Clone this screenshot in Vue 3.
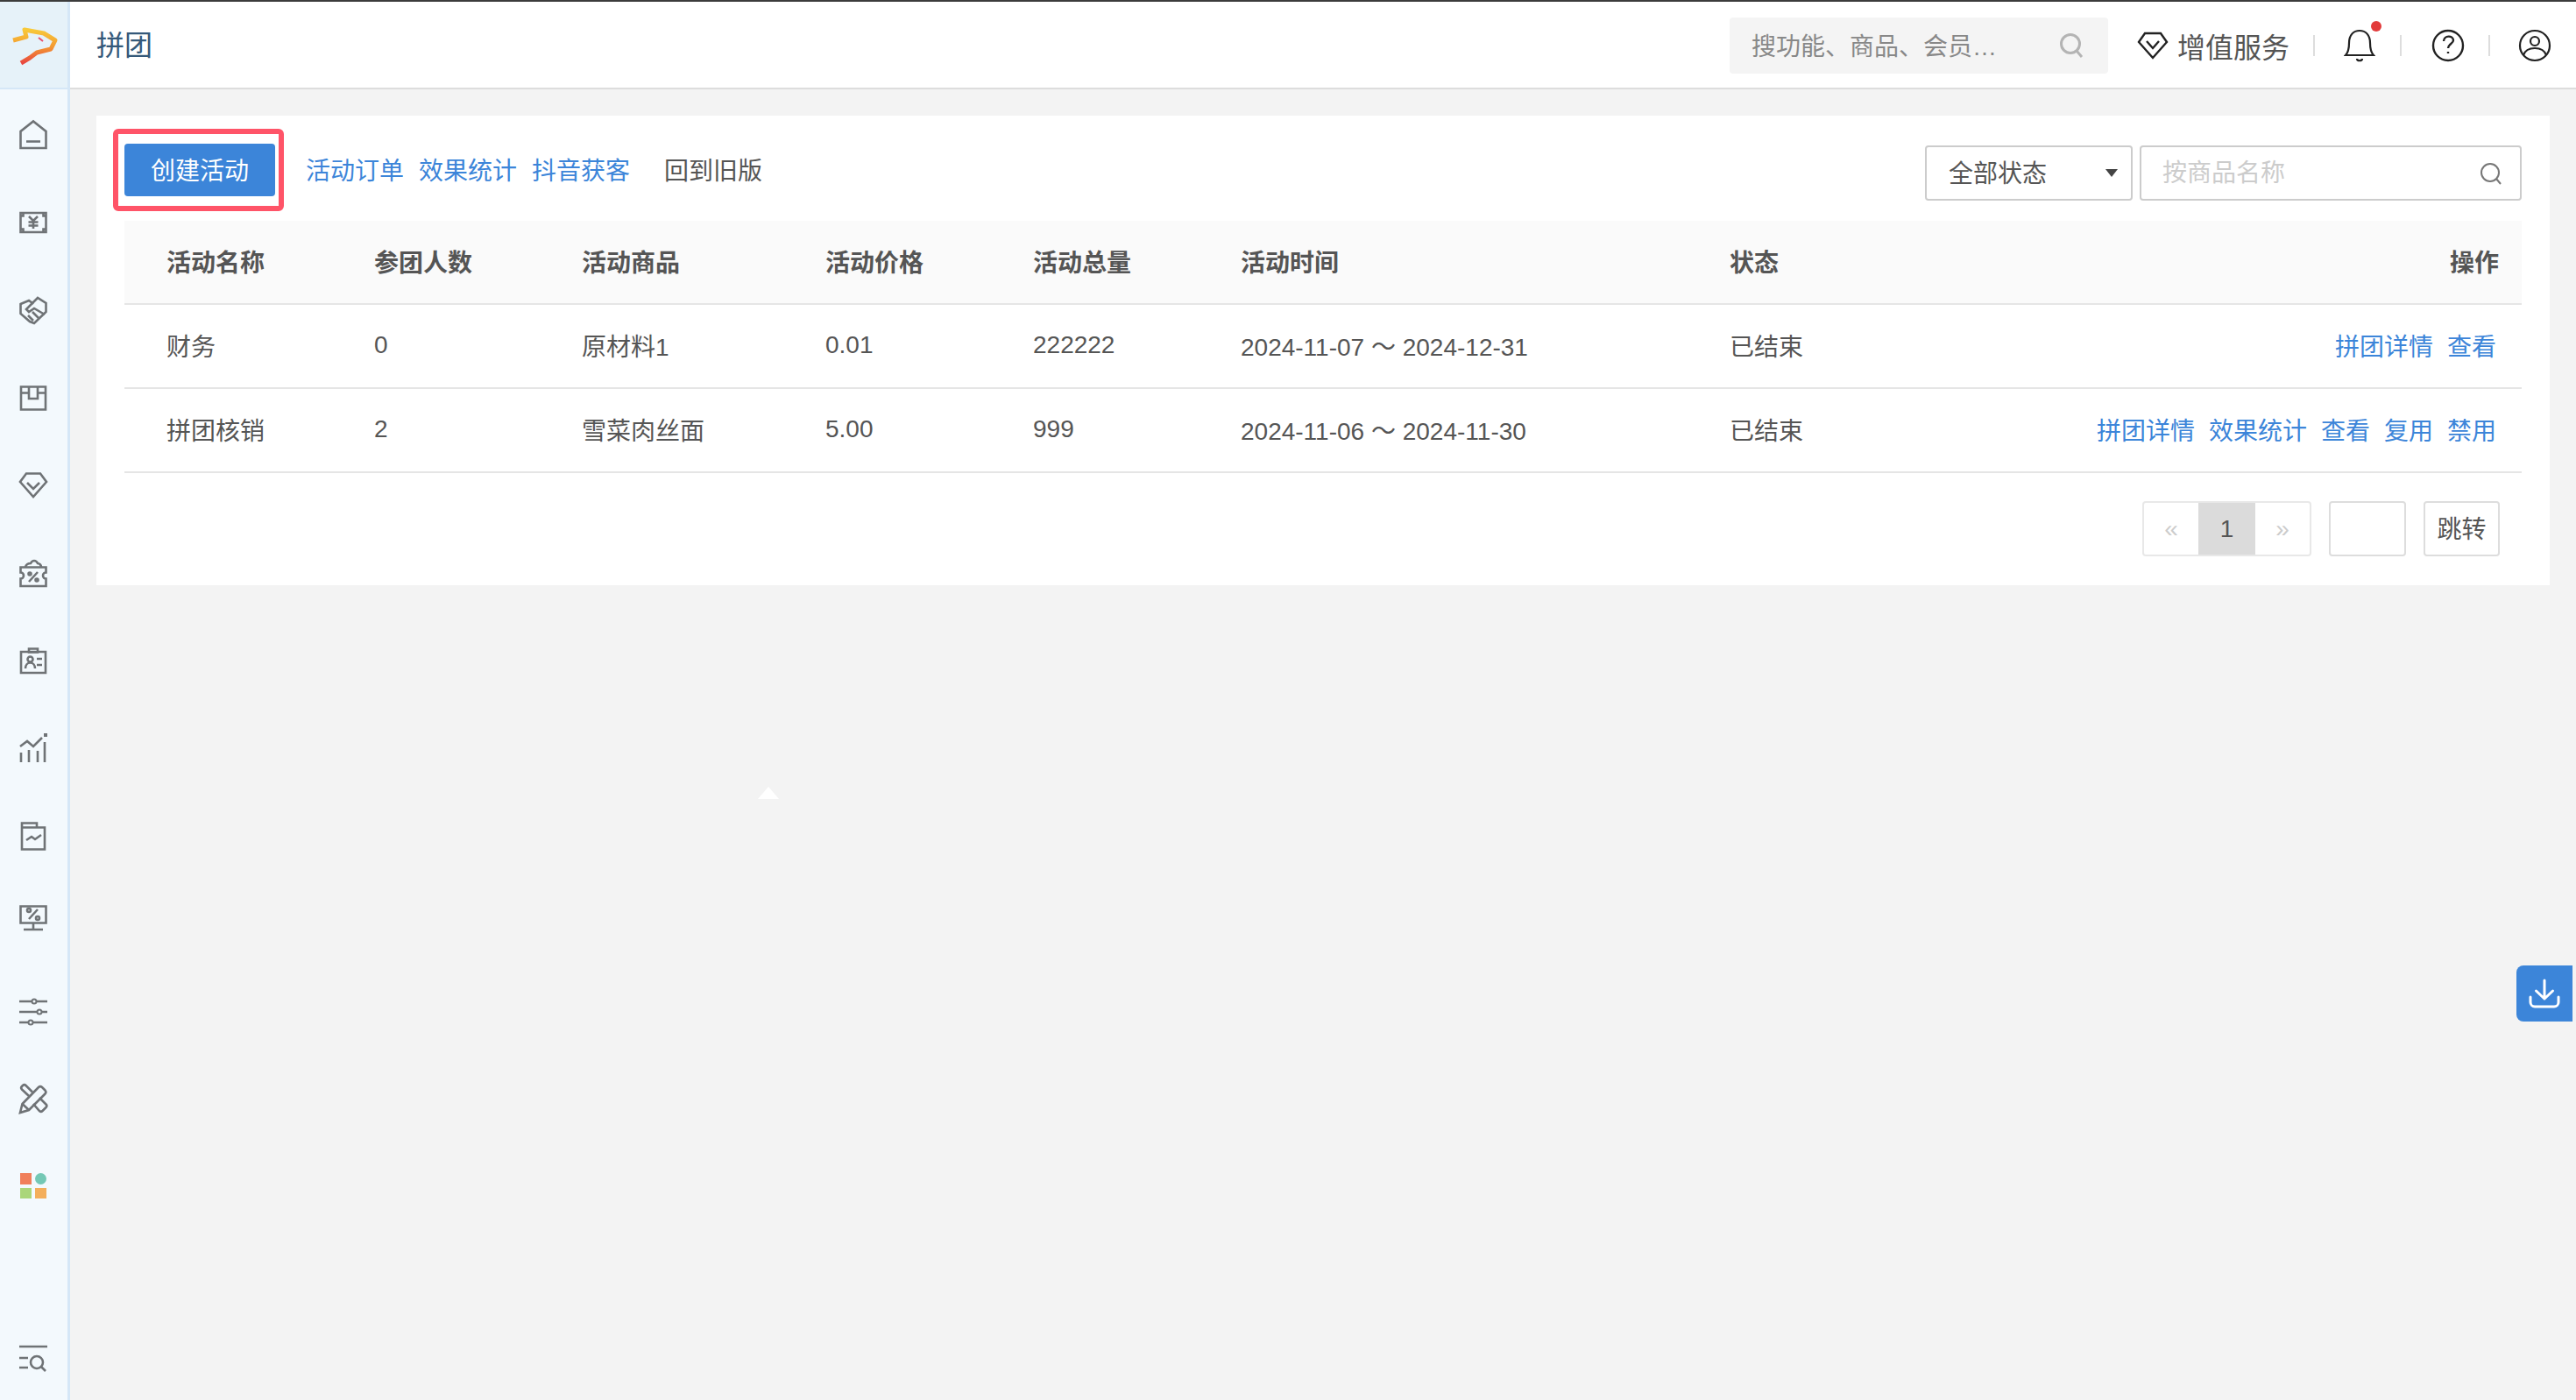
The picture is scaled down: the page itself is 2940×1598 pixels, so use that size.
<script setup>
const columns = [
  { label: '活动名称', width: '237px' },
  { label: '参团人数', width: '237px' },
  { label: '活动商品', width: '278px' },
  { label: '活动价格', width: '237px' },
  { label: '活动总量', width: '237px' },
  { label: '活动时间', width: '558px' },
  { label: '状态', width: '300px' },
  { label: '操作', width: 'auto' }
]

const rows = [
  { name: '财务', joined: '0', goods: '原材料1', price: '0.01', total: '222222', time: '2024-11-07 ～ 2024-12-31', status: '已结束', actions: ['拼团详情', '查看'] },
  { name: '拼团核销', joined: '2', goods: '雪菜肉丝面', price: '5.00', total: '999', time: '2024-11-06 ～ 2024-11-30', status: '已结束', actions: ['拼团详情', '效果统计', '查看', '复用', '禁用'] }
]

const links = ['活动订单', '效果统计', '抖音获客']
</script>

<template>
  <div class="page">
    <aside class="sidebar">
      <div class="logo">
        <svg width="78" height="98" viewBox="0 0 78 98" fill="none">
          <defs>
            <linearGradient id="logoGrad" x1="0" y1="0" x2="0" y2="1">
              <stop offset="0" stop-color="#f8c93a" />
              <stop offset="0.5" stop-color="#f39a32" />
              <stop offset="1" stop-color="#e9473f" />
            </linearGradient>
          </defs>
          <path d="M15 46l15-4-2-8 22 4 13 8-5 10-16 4-8 6-10 6" stroke="url(#logoGrad)" stroke-width="5" stroke-linejoin="round" />
          <path d="M44 43l5 4" stroke="#ea4f6a" stroke-width="2" />
        </svg>
      </div>
      <nav class="nav">
        <div class="nav-item"><svg class="ico" viewBox="0 0 32 36"><path d="M1.500 32V13L16 1.500 30.500 13v19z" /><path d="M8 24.500h16" /></svg></div>
        <div class="nav-item"><svg class="ico" viewBox="0 0 32 36"><path d="M1.500 6h29v22h-29z" /><path d="M11 10l5 5 5-5M16 15v9M10.500 16.500h11M10.500 20.500h11" /><path d="M1.500 9.500h3v-3.500M30.500 9.500h-3v-3.500M1.500 24.500h3v3.500M30.500 24.500h-3v3.500" /></svg></div>
        <div class="nav-item"><svg class="ico" viewBox="0 0 32 36"><path d="M1.500 10L11 6l4 3 6-6 9.500 6v10L17 32l-5-2-10.500-9z" /><path d="M16 8l-8 8 3 3 6-4 12 7M10 23l6 6M15 19l7 7" /></svg></div>
        <div class="nav-item"><svg class="ico" viewBox="0 0 32 36"><path d="M2 4.500h28v26H2z" /><path d="M2 11.500h9M21 11.500h9M11 4.500V18h10V4.500" /></svg></div>
        <div class="nav-item"><svg class="ico" viewBox="0 0 32 36"><path d="M8 3.500h16l7 9.500-15 17L1 13z" /><path d="M9 14l7 7 7-7" /></svg></div>
        <div class="nav-item"><svg class="ico" viewBox="0 0 32 36"><path d="M1.500 10.500h29v6a3.500 3.500 0 0 0 0 7v8.500h-29v-8.500a3.500 3.500 0 0 0 0-7z" /><path d="M7 10c1-3 3-4 6-4 2-4 6-4 8 0 2 0 4 2 4 4M11 27l10-11" /><circle cx="12" cy="18" r="1.500" /><circle cx="20" cy="25" r="1.500" /></svg></div>
        <div class="nav-item"><svg class="ico" viewBox="0 0 32 36"><path d="M2 7h28v24H2z" /><path d="M11 3.500h10v4H11z" /><circle cx="12.500" cy="15.500" r="3" /><path d="M7 26c0-4 2.500-6.500 5.500-6.500S18 22 18 26M20 15h6M20 22h6" /></svg></div>
        <div class="nav-item"><svg class="ico" viewBox="0 0 32 36"><path d="M1 15l8-6 7 6 10-10M2 22v11M11 19v14M21 20v13M29 10v23" /><path class="dot" d="M28 0h4v4h-4z" /></svg></div>
        <div class="nav-item"><svg class="ico" viewBox="0 0 32 36"><path d="M3 2.500h17v5h9v25H3zM3 7.500h17" /><path d="M8 22l6-4 4 3 7-5" /></svg></div>
        <div class="nav-item nav-up"><svg class="ico" viewBox="0 0 32 36"><path d="M1.500 5.500h29v19h-29zM16 24.500v7M5 32h22" /><path d="M11 20l10-11" /><circle cx="11" cy="10" r="2" /><circle cx="21" cy="19" r="2" /></svg></div>
        <div class="nav-item"><svg class="ico" viewBox="0 0 32 36"><path d="M0 6h32M0 18h32M0 30h32" /><circle class="knob" cx="17" cy="6" r="2.500" /><circle class="knob" cx="23" cy="18" r="2.500" /><circle class="knob" cx="13" cy="30" r="2.500" /></svg></div>
        <div class="nav-item"><svg class="ico" viewBox="0 0 32 36"><path d="M1 33l2.500-10L22 4a3 3 0 0 1 4 0l3.500 3.500a3 3 0 0 1 0 4L11 30zM3.500 23l7.500 7" /><path d="M11 14L3 6.500a2.500 2.500 0 0 1 0-3.500l1-1a2.500 2.500 0 0 1 3.500 0L15 9.500M16 23l7 8a2.500 2.500 0 0 0 3.500 0l4-4a2.500 2.500 0 0 0 0-3.500L23 16" /></svg></div>
        <div class="nav-item"><svg class="ico" viewBox="0 0 32 36"><path class="fill" fill="#f07f5b" d="M1 2h13v13H1z" /><circle class="fill" fill="#74c8b5" cx="24.500" cy="8.500" r="6.500" /><path class="fill" fill="#aad67a" d="M1 19h13v12H1z" /><path class="fill" fill="#f3ae5b" d="M18 19h13v12H18z" /></svg></div>
        <div class="nav-item nav-bottom"><svg class="ico" viewBox="0 0 32 36"><path d="M0 4h32M0 17h10M0 28h10" /><circle cx="20" cy="22" r="7" /><path d="M25 27l5 5" /></svg></div>
      </nav>
    </aside>

    <div class="main">
      <header class="topbar">
        <h1 class="title">拼团</h1>
        <div class="top-right">
          <div class="global-search">
            <input class="global-input" placeholder="搜功能、商品、会员…" />
            <svg class="search-ico" width="28" height="30" viewBox="0 0 28 30" fill="none" stroke="#b4b4b4" stroke-width="3"><circle cx="13" cy="13" r="10.500" /><path d="M20 21l6 7" /></svg>
          </div>
          <div class="vip">
            <svg width="36" height="32" viewBox="0 0 36 32" fill="none" stroke="#222" stroke-width="2.400"><path d="M9 2h18l7 10-16 18L2 12z" /><path d="M11 11l7 8 7-8" /></svg>
            <span>增值服务</span>
          </div>
          <i class="sep sep-vip"></i>
          <div class="top-icon">
            <svg width="36" height="38" viewBox="0 0 36 38" fill="none" stroke="#222" stroke-width="2.200"><path d="M2 30c3-3 4-6 4-14C6 7 11 2 18 2s12 5 12 14c0 8 1 11 4 14z" /><path d="M15 34c0 3 6 3 6 0" /></svg>
            <b class="red-dot"></b>
          </div>
          <i class="sep sep-bell"></i>
          <div class="top-icon">
            <svg width="38" height="38" viewBox="0 0 38 38" fill="none" stroke="#222" stroke-width="2.400"><circle cx="19" cy="19" r="17" /><path d="M14 14c0-7 11-7 11-1 0 4-6 4-6 9" /><path d="M19 26v2" /></svg>
          </div>
          <i class="sep sep-help"></i>
          <div class="top-icon">
            <svg width="38" height="38" viewBox="0 0 38 38" fill="none" stroke="#222" stroke-width="2.200"><circle cx="19" cy="19" r="17" /><circle cx="19" cy="14" r="5" /><path d="M6 30c2-6 8-8 13-8s11 2 13 8" /></svg>
          </div>
        </div>
      </header>

      <section class="content">
        <div class="card">
          <div class="toolbar">
            <button class="create-btn">创建活动</button>
            <a v-for="link in links" :key="link" class="tool-link">{{ link }}</a>
            <a class="old-link">回到旧版</a>
            <div class="filters">
              <div class="status-select">
                <span>全部状态</span>
                <i class="caret"></i>
              </div>
              <div class="goods-search">
                <input class="goods-input" placeholder="按商品名称" />
                <svg width="26" height="26" viewBox="0 0 26 26" fill="none" stroke="#777" stroke-width="2"><circle cx="12" cy="12" r="10" /><path d="M19 19l5 6" /></svg>
              </div>
            </div>
          </div>

          <table class="grid">
            <colgroup>
              <col v-for="col in columns" :key="col.label" :style="{ width: col.width }" />
            </colgroup>
            <thead>
              <tr>
                <th v-for="col in columns" :key="col.label">{{ col.label }}</th>
              </tr>
            </thead>
            <tbody>
              <tr v-for="row in rows" :key="row.name">
                <td>{{ row.name }}</td>
                <td>{{ row.joined }}</td>
                <td>{{ row.goods }}</td>
                <td>{{ row.price }}</td>
                <td>{{ row.total }}</td>
                <td>{{ row.time }}</td>
                <td>{{ row.status }}</td>
                <td class="actions">
                  <a v-for="action in row.actions" :key="action">{{ action }}</a>
                </td>
              </tr>
            </tbody>
          </table>

          <div class="pager">
            <div class="pages">
              <span class="page-arrow">«</span>
              <span class="page-current">1</span>
              <span class="page-arrow">»</span>
            </div>
            <input class="jump-input" />
            <button class="jump-btn">跳转</button>
          </div>
        </div>
      </section>
    </div>

    <i class="float-arrow"></i>
    <div class="download">
      <svg width="36" height="36" viewBox="0 0 36 36" fill="none" stroke="#fff" stroke-width="3" stroke-linecap="round" stroke-linejoin="round"><path d="M18 3v21M8.500 15l9.500 9 9.500-9" /><path d="M2 22v6a5 5 0 0 0 5 5h22a5 5 0 0 0 5-5v-6" /></svg>
    </div>
  </div>
</template>

<style>
html, body {
  margin: 0;
  background: #f3f3f3;
}
</style>

<style scoped>
.page {
  position: relative;
  display: flex;
  height: 1598px;
  box-sizing: border-box;
  border-top: 2px solid #3c3c3c;
  overflow: hidden;
  background: #f3f3f3;
  font-family: "Liberation Sans", "Noto Sans CJK SC", sans-serif;
  font-size: 28px;
  color: #555;
}

.sidebar {
  display: flex;
  flex-direction: column;
  flex: none;
  width: 80px;
  box-sizing: border-box;
  background: #f3f9fd;
  border-right: 3px solid #d5e7f7;
}

.logo {
  flex: none;
  height: 98px;
  background: #e6f2f9;
  border-bottom: 2px solid #d5e7f7;
}

.logo svg {
  display: block;
  margin-top: -2px;
}

.nav {
  display: flex;
  flex: 1;
  flex-direction: column;
  padding: 3px 0 0;
}

.nav-item {
  display: flex;
  flex: none;
  align-items: center;
  justify-content: center;
  height: 100px;
  padding-right: 1px;
}

.nav-up .ico {
  transform: translateY(-8px);
}

.nav-bottom {
  margin-top: auto;
  margin-bottom: -3px;
}

.ico {
  display: block;
  width: 32px;
  height: 36px;
  overflow: visible;
  fill: none;
  stroke: #6f7376;
  stroke-width: 2.600;
}

.ico .dot {
  fill: #6f7376;
  stroke: none;
}

.ico .knob {
  fill: #f3f9fd;
  stroke-width: 2;
}

.ico .fill {
  stroke: none;
}

.main {
  display: flex;
  flex: 1;
  flex-direction: column;
  min-width: 0;
}

.topbar {
  display: flex;
  flex: none;
  align-items: center;
  justify-content: space-between;
  box-sizing: border-box;
  height: 100px;
  padding: 2px 28px 0 30px;
  background: #fff;
  border-bottom: 2px solid #ddd;
}

.title {
  margin: 0 0 6px;
  font-size: 32px;
  font-weight: 400;
  color: #35597a;
}

.top-right {
  display: flex;
  align-items: center;
}

.global-search {
  display: flex;
  align-items: center;
  justify-content: space-between;
  box-sizing: border-box;
  width: 432px;
  height: 64px;
  margin-right: 33px;
  padding: 0 28px 0 25px;
  background: #f4f4f4;
  border-radius: 4px;
}

.global-input {
  width: 300px;
  padding: 4px 0 0;
  border: 0;
  outline: 0;
  background: transparent;
  font: inherit;
}

.global-input::placeholder {
  color: #888;
  opacity: 1;
}

.vip {
  display: flex;
  align-items: center;
  gap: 10px;
  font-size: 32px;
  color: #555;
}

.sep {
  display: block;
  width: 2px;
  height: 24px;
  background: #ddd;
}

.sep-vip {
  margin: 0 33px 0 27px;
}

.sep-bell {
  margin: 0 34px 0 28px;
}

.sep-help {
  margin: 0 32px 0 27px;
}

.top-icon {
  position: relative;
  display: flex;
}

.red-dot {
  position: absolute;
  top: -9px;
  right: -7px;
  width: 12px;
  height: 12px;
  border-radius: 50%;
  background: #e23b3b;
}

.content {
  flex: 1;
  padding: 30px 30px 0;
}

.card {
  box-sizing: border-box;
  height: 536px;
  padding: 0 32px;
  background: #fff;
}

.toolbar {
  display: flex;
  align-items: center;
  box-sizing: border-box;
  height: 120px;
  padding-top: 4px;
}

.create-btn {
  position: relative;
  width: 172px;
  height: 60px;
  margin-right: 35px;
  padding: 0 0 3px;
  border: 0;
  border-radius: 4px;
  background: #3c85d9;
  color: #fff;
  font: inherit;
}

.create-btn::after {
  content: "";
  position: absolute;
  top: -17px;
  right: -10px;
  bottom: -17px;
  left: -13px;
  border: 6px solid #ff5468;
  border-radius: 6px;
}

.tool-link {
  margin: 0 17px 2px 0;
  color: #3c85d9;
}

.old-link {
  margin: 0 0 2px 22px;
  color: #555;
}

.filters {
  display: flex;
  gap: 8px;
  margin: 7px 0 0 auto;
}

.status-select,
.goods-search {
  display: flex;
  align-items: center;
  justify-content: space-between;
  box-sizing: border-box;
  height: 63px;
  border: 2px solid #ccc;
  border-radius: 4px;
}

.status-select {
  width: 237px;
  padding: 0 15px 3px 25px;
}

.caret {
  width: 0;
  height: 0;
  margin-top: 3px;
  border-style: solid;
  border-width: 9px 7px 0;
  border-color: #444 transparent transparent;
}

.goods-search {
  width: 436px;
  padding: 0 20px 0 24px;
}

.goods-input {
  width: 300px;
  padding: 0;
  border: 0;
  outline: 0;
  font: inherit;
}

.goods-input::placeholder {
  color: #ccc;
  opacity: 1;
}

.grid {
  width: 100%;
  table-layout: fixed;
  border-collapse: separate;
  border-spacing: 0;
}

.grid th,
.grid td {
  box-sizing: border-box;
  height: 96px;
  padding: 0 0 3px 48px;
  border-bottom: 2px solid #e5e5e5;
  text-align: left;
  white-space: nowrap;
}

.grid th {
  background: #fafafa;
  font-weight: 700;
}

.grid th:last-child {
  padding: 0 26px 3px 0;
  text-align: right;
}

.grid .actions {
  padding: 0 29px 3px 0;
  text-align: right;
}

.actions a {
  margin-left: 16px;
  color: #3c85d9;
}

.pager {
  display: flex;
  justify-content: flex-end;
  gap: 20px;
  margin: 32px 25px 0 0;
}

.pages {
  display: flex;
  box-sizing: border-box;
  width: 193px;
  height: 63px;
  border: 2px solid #e8e8e8;
  border-radius: 4px;
  overflow: hidden;
}

.page-arrow,
.page-current {
  display: flex;
  flex: 1;
  align-items: center;
  justify-content: center;
}

.page-arrow {
  color: #ccc;
}

.page-current {
  flex: none;
  width: 65px;
  background: #dbdbdb;
}

.jump-input {
  box-sizing: border-box;
  width: 88px;
  height: 63px;
  border: 2px solid #ddd;
  border-radius: 4px;
  outline: 0;
}

.jump-btn {
  box-sizing: border-box;
  width: 87px;
  height: 63px;
  padding: 0 0 3px;
  border: 2px solid #ddd;
  border-radius: 4px;
  background: #fff;
  color: #555;
  font: inherit;
}

.float-arrow {
  position: absolute;
  top: 896px;
  left: 865px;
  width: 0;
  height: 0;
  border-style: solid;
  border-width: 0 12px 14px;
  border-color: transparent transparent #fff;
}

.download {
  position: absolute;
  top: 1100px;
  right: 4px;
  display: flex;
  align-items: center;
  justify-content: center;
  width: 64px;
  height: 64px;
  background: #3c85d9;
  border-radius: 8px 0 0 8px;
}
</style>
